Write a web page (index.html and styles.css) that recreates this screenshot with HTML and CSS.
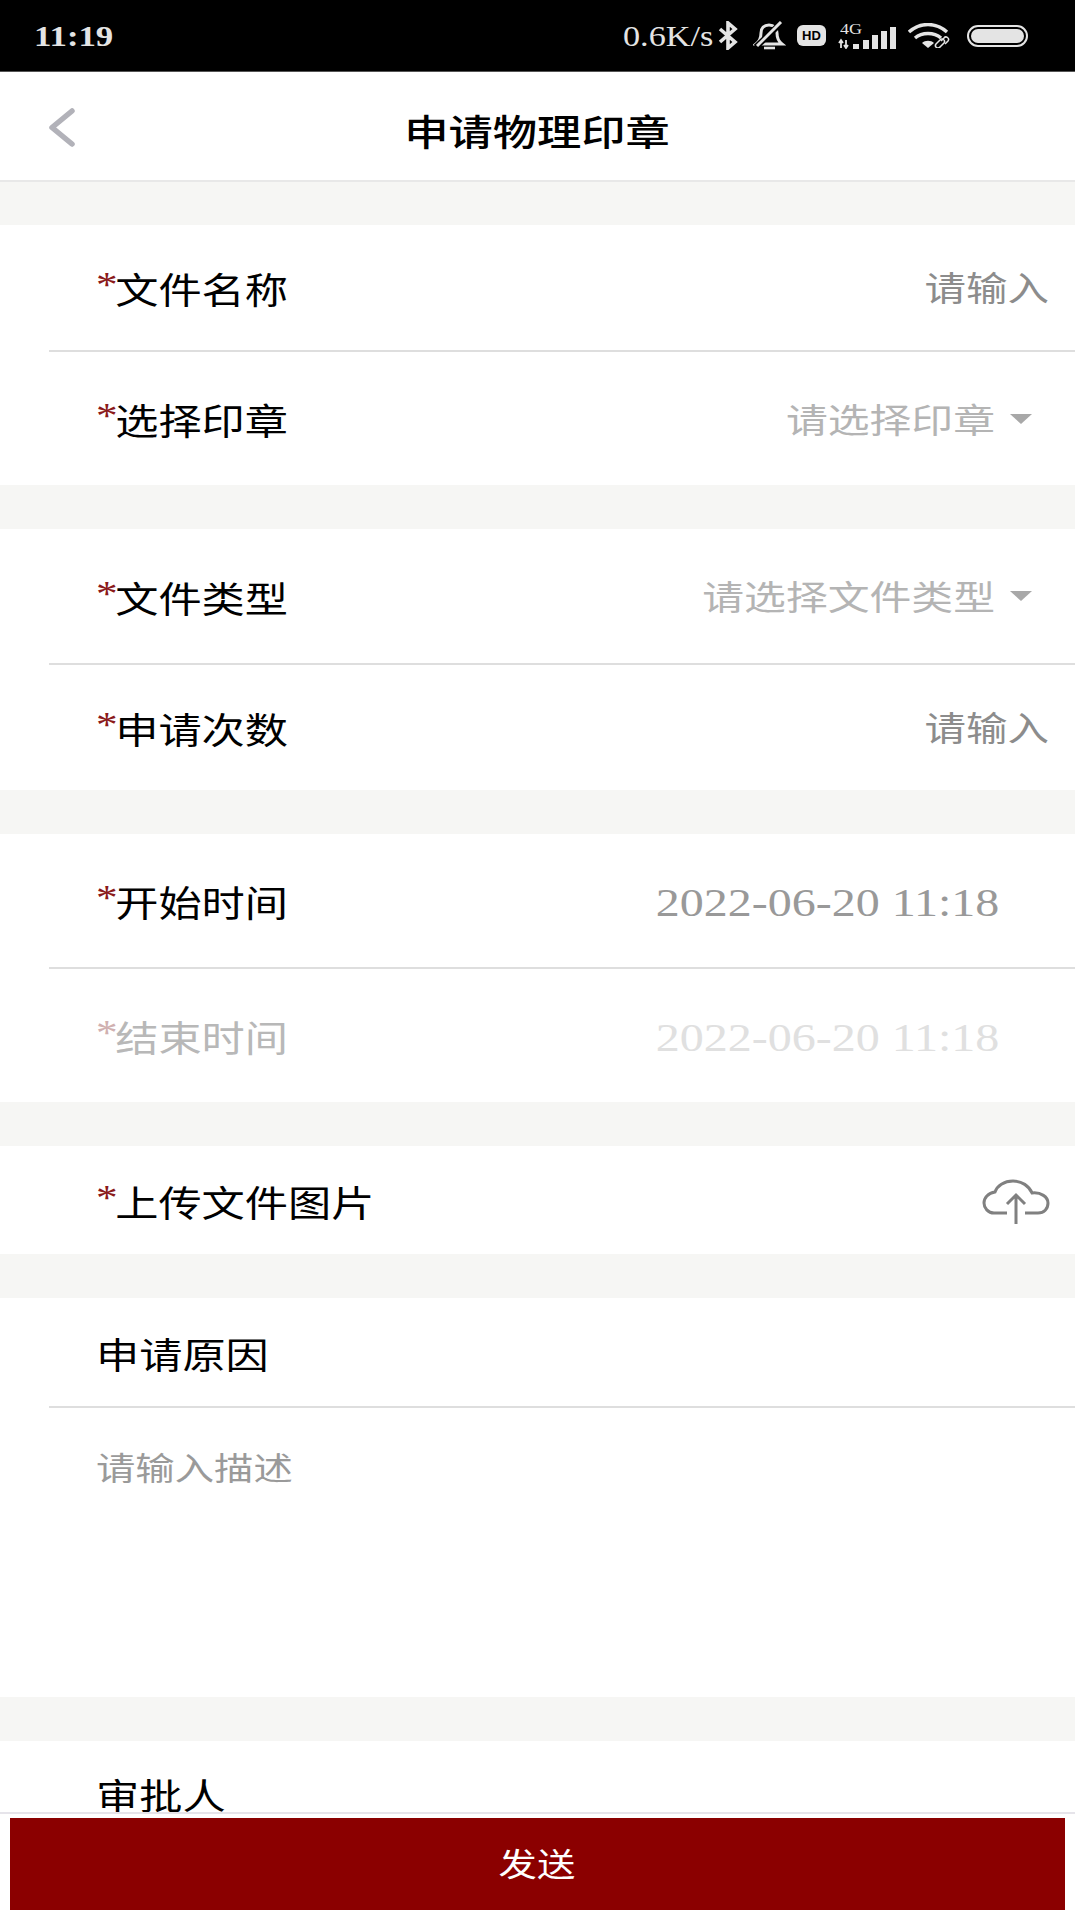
FILE: index.html
```html
<!DOCTYPE html>
<html lang="zh-CN">
<head>
  <meta charset="utf-8">
  <meta name="viewport" content="width=device-width, initial-scale=1">
  <title>申请物理印章</title>
  <link rel="stylesheet" href="styles.css">
</head>
<body>
  <div class="statusbar">
    <span class="clock">11:19</span>
    <div class="status-icons">
      <span class="speed">0.6K/s</span>
      <svg class="ic-bt" viewBox="0 0 21 29" width="21" height="29"><path d="M2 8l15 13-7 6V2l7 6L2 21" fill="none" stroke="#e4e4e4" stroke-width="3.6"/></svg>
      <svg class="ic-bell" viewBox="0 0 33 29" width="33" height="29"><path d="M3 23h26c-4-3-5-6-5-11 0-5-3-8-8-8s-8 3-8 8c0 5-1 8-5 11z" fill="none" stroke="#e4e4e4" stroke-width="3"/><path d="M11 27h11" stroke="#e4e4e4" stroke-width="2.6"/><path d="M3 26L29 1" stroke="#000" stroke-width="6"/><path d="M4 25L28 1" stroke="#e4e4e4" stroke-width="3"/></svg>
      <span class="ic-hd">HD</span>
      <div class="ic-signal">
        <span class="net">4G</span>
        <svg viewBox="0 0 58 23" width="58" height="23"><path d="M3 14v8M1 17l2-3 2 3M8 14v8M6 19l2 3 2-3" stroke="#e4e4e4" stroke-width="1.8" fill="none"/><g fill="#e4e4e4"><rect x="15" y="18" width="6" height="5"/><rect x="25" y="14" width="6" height="9"/><rect x="34" y="9" width="6" height="14"/><rect x="43" y="5" width="6" height="18"/><rect x="52" y="1" width="6" height="22"/></g></svg>
      </div>
      <svg class="ic-wifi" viewBox="0 0 42 25" width="42" height="25"><g fill="none" stroke="#e4e4e4" stroke-width="3.4"><path d="M1 9c11-10 27-10 38 0"/><path d="M7 15c7-6 19-6 26 0"/></g><path d="M14 20c3-3 9-3 12 0l-6 5z" fill="#e4e4e4"/><g fill="none" stroke="#e4e4e4" stroke-width="1.500"><path d="M28 21l4-4a2.500 2.500 0 0 1 4 3l-4 4a2.500 2.500 0 0 1-4-3z"/><path d="M33 18l3-3a2.500 2.500 0 0 1 4 3l-3 3"/></g></svg>
      <div class="ic-battery"><span class="level"></span></div>
    </div>
  </div>

  <header class="topbar">
    <svg class="back" viewBox="0 0 27 39" width="27" height="39"><path d="M24 3L4 19.500 24 36" fill="none" stroke="#b2b2b9" stroke-width="5.500" stroke-linecap="round" stroke-linejoin="round"/></svg>
    <h1 class="title">申请物理印章</h1>
  </header>

  <main class="form">
    <section class="group">
      <div class="row h127 line">
        <span class="label"><i>*</i>文件名称</span>
        <span class="value">请输入</span>
      </div>
      <div class="row h133">
        <span class="label"><i>*</i>选择印章</span>
        <span class="picker"><span class="value light">请选择印章</span><span class="caret"></span></span>
      </div>
    </section>

    <section class="group">
      <div class="row h136 line">
        <span class="label"><i>*</i>文件类型</span>
        <span class="picker"><span class="value light">请选择文件类型</span><span class="caret"></span></span>
      </div>
      <div class="row h125">
        <span class="label"><i>*</i>申请次数</span>
        <span class="value">请输入</span>
      </div>
    </section>

    <section class="group">
      <div class="row h135 line">
        <span class="label"><i>*</i>开始时间</span>
        <span class="date">2022-06-20 11:18</span>
      </div>
      <div class="row h133 off">
        <span class="label"><i>*</i>结束时间</span>
        <span class="date">2022-06-20 11:18</span>
      </div>
    </section>

    <section class="group">
      <div class="row h108">
        <span class="label"><i>*</i>上传文件图片</span>
        <svg class="upload" viewBox="0 0 68 45" width="68" height="45"><path d="M25 34H12C6 34 2 29 2 24s4-10 11-11C15 7 22 2 31 2c9 0 16 5 19 12 9-1 16 4 16 10s-4 10-10 10H43" fill="none" stroke="#808080" stroke-width="3"/><path d="M34 45V16M25 25l9-9 9 9" fill="none" stroke="#808080" stroke-width="3"/></svg>
      </div>
    </section>

    <section class="group">
      <div class="row h110 line">
        <span class="label plain">申请原因</span>
      </div>
      <div class="describe"><span class="hint">请输入描述</span></div>
    </section>

    <section class="group">
      <div class="row h108 approver">
        <span class="label plain">审批人</span>
      </div>
    </section>
  </main>

  <footer class="footbar">
    <button class="send"><span>发送</span></button>
  </footer>
</body>
</html>
```

FILE: styles.css
```css
* {
  box-sizing: border-box;
}
html, body {
  margin: 0;
  height: 1915px;
  overflow: hidden;
}
body {
  background-color: #f6f6f4;
  color: #000;
  font-family: "Noto Sans CJK SC", "Liberation Serif", sans-serif;
  position: relative;
}

/* the whole shot is stretched sideways, so text gets a scaleX */
.title, .label, .value, .date, .hint, .send span, .clock, .speed {
  display: inline-block;
  line-height: 1;
  white-space: nowrap;
}

.statusbar {
  height: 72px;
  background: #000;
  border-bottom: 1px solid #555;
  color: #e4e4e4;
  display: flex;
  align-items: center;
  justify-content: space-between;
  padding: 0 47px 0 34px;
  font-family: "Liberation Serif", serif;
}
.clock {
  font-size: 29px;
  font-weight: bold;
  margin-top: 2px;
  transform: scaleX(1.2);
  transform-origin: left center;
}
.status-icons {
  display: flex;
  align-items: center;
}
.speed {
  font-size: 29px;
  width: 87px;
  margin-top: 2px;
  margin-right: 8px;
  transform: scaleX(1.18);
  transform-origin: left center;
}
.ic-bt {
  margin-right: 14px;
}
.ic-bell {
  margin-right: 11px;
}
.ic-hd {
  width: 29px;
  height: 21px;
  border-radius: 6px;
  background: #e4e4e4;
  color: #000;
  font: bold 13px/21px "Liberation Sans", sans-serif;
  text-align: center;
  margin-right: 12px;
}
.ic-signal {
  width: 58px;
  height: 26px;
  margin-right: 12px;
  position: relative;
}
.ic-signal svg {
  display: block;
  margin-top: 3px;
}
.net {
  position: absolute;
  left: 2px;
  top: -1px;
  font-size: 15px;
  line-height: 1;
  transform: scaleX(1.2);
  transform-origin: left center;
}
.ic-wifi {
  margin-right: 17px;
}
.ic-battery {
  width: 61px;
  height: 22px;
  border: 2px solid #e4e4e4;
  border-radius: 11px;
  padding: 2px;
}
.level {
  display: block;
  height: 100%;
  border-radius: 7px;
  background: #e4e4e4;
}

.topbar {
  height: 110px;
  background: #fff;
  border-bottom: 2px solid #e8e8e8;
  display: flex;
  align-items: center;
  justify-content: center;
  position: relative;
}
.back {
  position: absolute;
  left: 48px;
  top: 36px;
}
.title {
  margin: 8px 0 0;
  font-size: 36px;
  font-weight: 500;
  transform: scaleX(1.23);
}

.form {
  padding-top: 43px;
  display: flex;
  flex-direction: column;
  gap: 44px;
}
.group {
  background: #fff;
}
.row {
  margin-left: 49px;
  padding: 0 26px 0 47px;
  display: flex;
  align-items: center;
  justify-content: space-between;
}
.line {
  border-bottom: 2px solid #dedede;
}
.h108 { height: 108px; }
.h110 { height: 110px; }
.h125 { height: 125px; }
.h127 { height: 127px; }
.h133 { height: 133px; }
.h135 { height: 135px; }
.h136 { height: 136px; }

.label {
  font-size: 36px;
  margin-top: 1px;
  transform: scaleX(1.2);
  transform-origin: left center;
}
.label i {
  display: inline-block;
  width: 16px;
  font-family: "Liberation Serif", serif;
  font-style: normal;
  font-size: 36px;
  line-height: 0;
  vertical-align: 7px;
  color: #8b1a1a;
}
.plain {
  margin-top: 2px;
}
.value {
  font-size: 34px;
  margin-top: -2px;
  color: #8c8c8c;
  transform: scaleX(1.22);
  transform-origin: right center;
}
.light {
  margin-top: 0;
  color: #b4b4b4;
  transform: scaleX(1.23);
}
.picker {
  display: flex;
  align-items: center;
  gap: 15px;
  margin-right: 17px;
}
.caret {
  width: 0;
  height: 0;
  border-left: 11px solid transparent;
  border-right: 11px solid transparent;
  border-top: 10px solid #a8a8a8;
}
.date {
  font-family: "Liberation Serif", serif;
  font-size: 40px;
  margin-top: 4px;
  color: #999;
  margin-right: 50px;
  transform: scaleX(1.2);
  transform-origin: right center;
}
.off .label {
  color: #b8b8b8;
}
.off .label i {
  color: #d0b0b0;
}
.off .date {
  color: #e0e0e0;
}
.upload {
  margin-right: -1px;
  margin-top: 3px;
}
.describe {
  height: 289px;
  padding: 42px 0 0 96px;
}
.hint {
  font-size: 32px;
  color: #9a9a9a;
  transform: scaleX(1.23);
  transform-origin: left center;
}
.approver {
  align-items: flex-start;
  padding-top: 35px;
}
.approver .label {
  margin-top: 0;
}

.footbar {
  position: absolute;
  left: 0;
  right: 0;
  bottom: 0;
  height: 103px;
  background: #fff;
  border-top: 2px solid #e6e4ea;
  padding: 4px 10px 5px;
}
.send {
  display: block;
  width: 100%;
  height: 92px;
  border: 0;
  padding: 0 0 5px;
  background: #8b0000;
  color: #fff;
  font-family: inherit;
  font-size: 32px;
}
.send span {
  transform: scaleX(1.2);
}
```
